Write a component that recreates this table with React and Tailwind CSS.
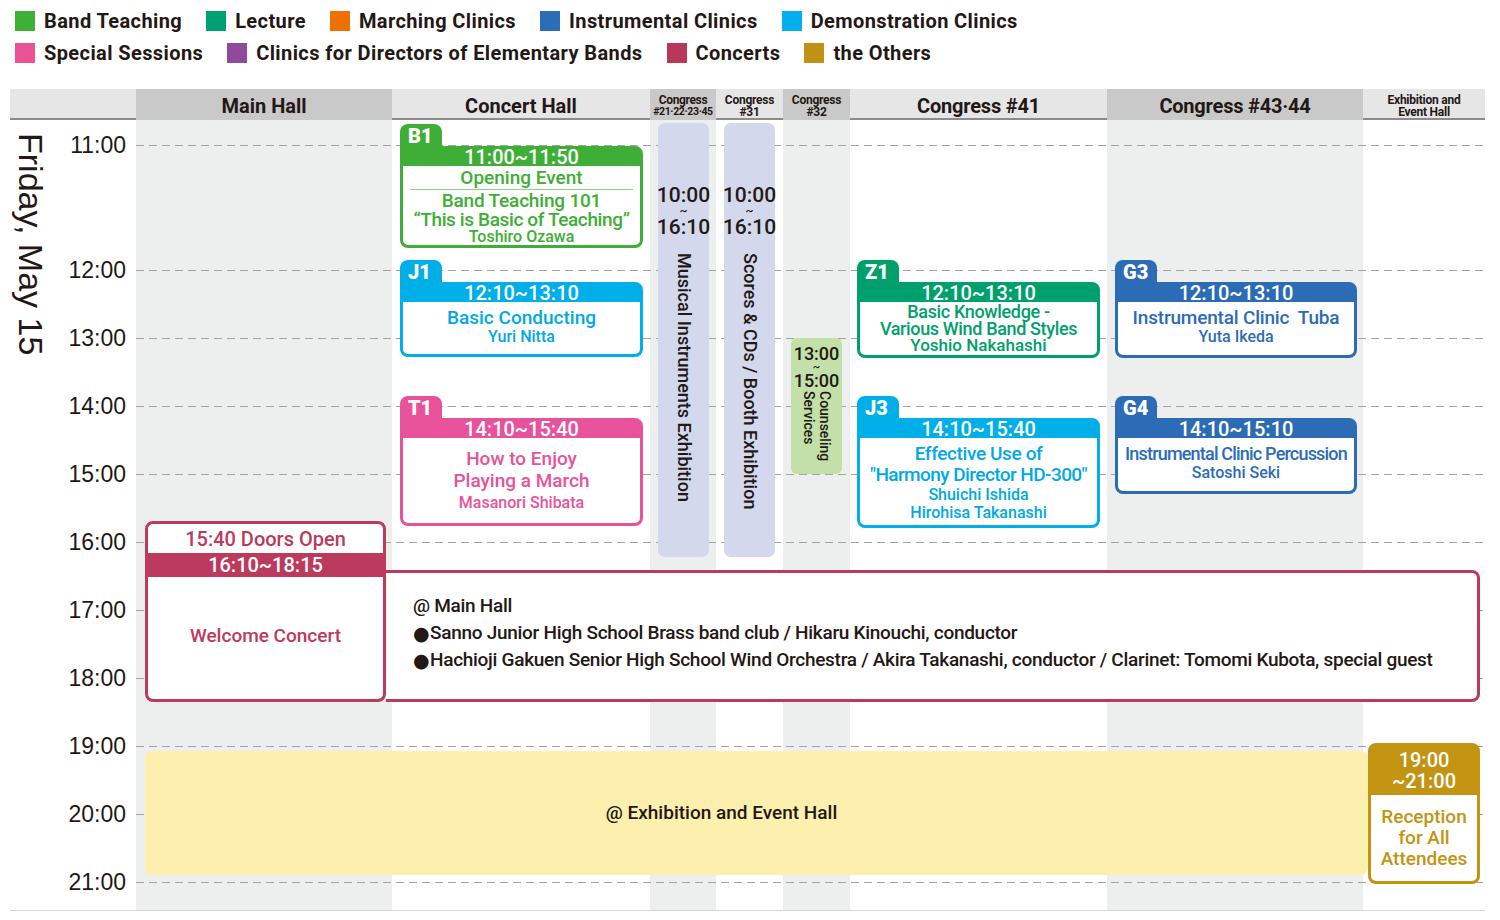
import React from 'react';

// time -> vertical offset inside the timetable body (11:00–12:00 is stretched)
const y = (h, m = 0) => {
  const t = (h - 11) * 60 + m;
  return t <= 60 ? 25 + (t * 125) / 60 : 150 + ((t - 60) * 68) / 60;
};

const HOURS = [11, 12, 13, 14, 15, 16, 17, 18, 19, 20, 21];

const LEGEND = [
  [
    ['Band Teaching', 'bg-[#3db134]'],
    ['Lecture', 'bg-[#00a073]'],
    ['Marching Clinics', 'bg-[#ee7000]'],
    ['Instrumental Clinics', 'bg-[#2b6db7]'],
    ['Demonstration Clinics', 'bg-[#00afec]'],
  ],
  [
    ['Special Sessions', 'bg-[#ea5297]'],
    ['Clinics for Directors of Elementary Bands', 'bg-[#8e4a9b]'],
    ['Concerts', 'bg-[#b9385a]'],
    ['the Others', 'bg-[#c09112]'],
  ],
];

const THEME = {
  green: { bg: 'bg-[#3eae36]', border: 'border-[#3eae36]', text: 'text-[#3eae36]' },
  cyan: { bg: 'bg-[#00aee8]', border: 'border-[#00aee8]', text: 'text-[#00a9e6]' },
  pink: { bg: 'bg-[#e8529a]', border: 'border-[#e8529a]', text: 'text-[#e8529a]' },
  teal: { bg: 'bg-[#00a06c]', border: 'border-[#00a06c]', text: 'text-[#00a06c]' },
  blue: { bg: 'bg-[#2c6cb7]', border: 'border-[#2c6cb7]', text: 'text-[#2c6cb7]' },
};

const COLS = 'grid-cols-[126px_256px_258px_66px_67px_67px_257px_256px_122px]';

function Session({ code, theme, time, x, start, end, extra = 7, w = 243, className = '', children }) {
  const top = Math.round(y(...start) + 1);
  const height = Math.round(y(...end) - y(...start)) + extra;
  return (
    <div className="absolute" style={{ left: x, top: top - 22, width: w }}>
      <div className={`h-[22px] w-[42px] rounded-t-[8px] ${theme.bg} pl-[8px] text-[20px] font-black leading-[25px] text-white`}>
        {code}
      </div>
      <div className={`flex flex-col rounded-[8px] rounded-tl-none border-[3px] ${theme.border} bg-white`} style={{ height }}>
        <div className={`h-[17px] ${theme.bg} text-center text-[20px] font-medium leading-[17px] text-white`}>{time}</div>
        <div className={`flex flex-1 flex-col items-center text-center font-medium ${theme.text} ${className}`}>{children}</div>
      </div>
    </div>
  );
}

function Exhibit({ x, children }) {
  return (
    <div
      className="absolute flex w-[51px] flex-col items-center rounded-[7px] bg-[#d3d8ec] pt-[62px] font-medium text-[#231815]"
      style={{ left: x, top: 3, height: Math.round(y(16, 10)) + 1 }}
    >
      <div className="text-[21px] leading-[21px]">10:00</div>
      <div className="text-[12px] leading-[11px]">~</div>
      <div className="text-[21px] leading-[21px]">16:10</div>
      <div className="mt-[15px] text-[18px] leading-[20px] [writing-mode:vertical-rl]">{children}</div>
    </div>
  );
}

function Bullet() {
  return <span className="inline-block w-[17px] align-[-1px] font-['DejaVu_Sans',sans-serif] text-[19px] leading-none">●</span>;
}

export default function App() {
  return (
    <div className="h-[920px] w-[1500px] overflow-hidden bg-white font-['Roboto','Noto_Sans',sans-serif] text-[#231815]">
      {/* Legend */}
      <div className="flex flex-col gap-[12px] pl-[15px] pt-[11px]">
        {LEGEND.map((row, i) => (
          <div key={i} className="flex h-[20px] items-center gap-x-[24px]">
            {row.map(([label, color]) => (
              <div key={label} className="flex items-center gap-[9px]">
                <span className={`h-[20px] w-[20px] ${color}`} />
                <span className="text-[20px] font-bold leading-[20px] tracking-[0.02em]">{label}</span>
              </div>
            ))}
          </div>
        ))}
      </div>

      {/* Room header */}
      <div className={`ml-[10px] mt-[26px] grid h-[31px] w-[1475px] ${COLS} border-b-2 border-[#8b8b8b] bg-[#e6e6e6] font-bold`}>
        <div />
        <div className="flex items-center justify-center bg-[#c9c9c9] pt-[2px] text-[20px]">Main Hall</div>
        <div className="flex items-center justify-center pt-[2px] text-[20px]">Concert Hall</div>
        <div className="flex flex-col items-center justify-center bg-[#c9c9c9] pt-[1px] text-[12px] leading-[12px] tracking-[-0.03em]">
          <span>Congress</span>
          <span className="text-[10.5px]">#21·22·23·45</span>
        </div>
        <div className="flex flex-col items-center justify-center pt-[1px] text-[12px] leading-[12px] tracking-[-0.02em]">
          <span>Congress</span>
          <span>#31</span>
        </div>
        <div className="flex flex-col items-center justify-center bg-[#c9c9c9] pt-[1px] text-[12px] leading-[12px] tracking-[-0.02em]">
          <span>Congress</span>
          <span>#32</span>
        </div>
        <div className="flex items-center justify-center pt-[2px] text-[20px] tracking-[-0.01em]">Congress #41</div>
        <div className="flex items-center justify-center bg-[#c9c9c9] pt-[2px] text-[20px] tracking-[-0.01em]">Congress #43·44</div>
        <div className="flex flex-col items-center justify-center pt-[1px] text-[12px] leading-[12px] tracking-[-0.02em]">
          <span>Exhibition and</span>
          <span>Event Hall</span>
        </div>
      </div>

      {/* Timetable body */}
      <div className={`relative ml-[10px] grid h-[791px] w-[1475px] ${COLS} border-b border-[#d6d6d6]`}>
        <div />
        <div className="bg-[#edeeee]" />
        <div />
        <div className="bg-[#edeeee]" />
        <div />
        <div className="bg-[#edeeee]" />
        <div />
        <div className="bg-[#edeeee]" />
        <div />

        {/* Day label */}
        <div className="absolute left-[4px] top-[13px] font-['Liberation_Sans',Arial,sans-serif] text-[34px] leading-[34px] [writing-mode:vertical-rl]">
          Friday, May 15
        </div>

        {/* Hour lines */}
        {HOURS.map((h) => (
          <div key={h} className="absolute left-0 flex w-full items-center" style={{ top: Math.round(y(h)) - 13 }}>
            <div className="w-[116px] text-right font-['Liberation_Sans',Arial,sans-serif] text-[23px] leading-[26px]">{h}:00</div>
            <div className="ml-[10px] h-px flex-1 bg-[repeating-linear-gradient(90deg,#a3a3a3_0_8px,transparent_8px_13px)]" />
          </div>
        ))}

        {/* Concert Hall */}
        <Session code="B1" theme={THEME.green} time="11:00~11:50" x={390} start={[11, 0]} end={[11, 50]} extra={-2} className="pt-[2px]">
          <div className="text-[19px] leading-[20px]">Opening Event</div>
          <div className="my-[1px] h-px w-[223px] bg-[#8fcf86]" />
          <div className="text-[19px] leading-[19px] tracking-[-0.01em]">Band Teaching 101</div>
          <div className="text-[19px] leading-[19px] tracking-[-0.02em]">“This is Basic of Teaching”</div>
          <div className="text-[16px] leading-[15px]">Toshiro Ozawa</div>
        </Session>
        <Session code="J1" theme={THEME.cyan} time="12:10~13:10" x={390} start={[12, 10]} end={[13, 10]} className="justify-center pb-[4px]">
          <div className="text-[19px] leading-[21px]">Basic Conducting</div>
          <div className="text-[16px] leading-[17px]">Yuri Nitta</div>
        </Session>
        <Session code="T1" theme={THEME.pink} time="14:10~15:40" x={390} start={[14, 10]} end={[15, 40]} extra={6} className="justify-center">
          <div className="text-[19px] leading-[22px]">How to Enjoy</div>
          <div className="text-[19px] leading-[22px]">Playing a March</div>
          <div className="text-[16px] leading-[21px]">Masanori Shibata</div>
        </Session>

        {/* Congress #41 */}
        <Session code="Z1" theme={THEME.teal} time="12:10~13:10" x={847} start={[12, 10]} end={[13, 10]} extra={8} className="justify-center">
          <div className="text-[18px] leading-[17px] tracking-[-0.02em]">Basic Knowledge -</div>
          <div className="text-[18px] leading-[17px] tracking-[-0.02em]">Various Wind Band Styles</div>
          <div className="text-[17px] leading-[17px]">Yoshio Nakahashi</div>
        </Session>
        <Session code="J3" theme={THEME.cyan} time="14:10~15:40" x={847} start={[14, 10]} end={[15, 40]} extra={8} className="justify-center">
          <div className="text-[19px] leading-[21px] tracking-[-0.02em]">Effective Use of</div>
          <div className="text-[19px] leading-[22px] tracking-[-0.03em]">"Harmony Director HD-300"</div>
          <div className="text-[16px] leading-[18px]">Shuichi Ishida</div>
          <div className="text-[16px] leading-[17px]">Hirohisa Takanashi</div>
        </Session>

        {/* Congress #43·44 */}
        <Session code="G3" theme={THEME.blue} time="12:10~13:10" x={1105} w={242} start={[12, 10]} end={[13, 10]} extra={8} className="justify-center pb-[4px]">
          <div className="whitespace-pre text-[19px] leading-[21px] tracking-[-0.01em]">Instrumental Clinic  Tuba</div>
          <div className="text-[16px] leading-[18px]">Yuta Ikeda</div>
        </Session>
        <Session code="G4" theme={THEME.blue} time="14:10~15:10" x={1105} w={242} start={[14, 10]} end={[15, 10]} extra={8} className="justify-center pb-[4px]">
          <div className="whitespace-nowrap text-[18px] leading-[21px] tracking-[-0.045em]">Instrumental Clinic Percussion</div>
          <div className="text-[16px] leading-[18px]">Satoshi Seki</div>
        </Session>

        {/* Exhibitions */}
        <Exhibit x={648}>Musical Instruments Exhibition</Exhibit>
        <Exhibit x={714}>Scores &amp; CDs / Booth Exhibition</Exhibit>
        <div
          className="absolute left-[781px] flex w-[51px] flex-col items-center rounded-[6px] bg-[#c2e0a8] pt-[7px] font-medium"
          style={{ top: Math.round(y(13)), height: Math.round(y(15) - y(13)) }}
        >
          <div className="text-[18px] leading-[17px]">13:00</div>
          <div className="text-[11px] leading-[10px]">~</div>
          <div className="text-[18px] leading-[17px]">15:00</div>
          <div className="mt-[2px] text-[14px] leading-[16px] [writing-mode:vertical-rl]">
            Counseling
            <br />
            Services
          </div>
        </div>

        {/* Welcome concert */}
        <div
          className="absolute left-[135px] flex w-[241px] flex-col rounded-[8px] border-[3px] border-[#bb3a5d] bg-white font-medium text-[#bb3a5d]"
          style={{ top: Math.round(y(15, 40)) + 2, height: 181 }}
        >
          <div className="h-[29px] text-center text-[20px] leading-[30px]">15:40 Doors Open</div>
          <div className="h-[24px] bg-[#bb3a5d] text-center text-[20px] leading-[25px] text-white">16:10~18:15</div>
          <div className="flex flex-1 items-center justify-center pb-[3px] text-[19px]">Welcome Concert</div>
        </div>
        <div
          className="absolute left-[376px] flex w-[1094px] flex-col justify-center rounded-r-[8px] border-[3px] border-l-0 border-[#bb3a5d] bg-white pb-[8px] pl-[27px] text-[19px] font-medium leading-[27px] tracking-[-0.015em]"
          style={{ top: 450, height: 132 }}
        >
          <div>@ Main Hall</div>
          <div>
            <Bullet />
            Sanno Junior High School Brass band club / Hikaru Kinouchi, conductor
          </div>
          <div className="whitespace-nowrap">
            <Bullet />
            Hachioji Gakuen Senior High School Wind Orchestra / Akira Takanashi, conductor / Clarinet: Tomomi Kubota, special guest
          </div>
        </div>

        {/* Exhibition and Event Hall */}
        <div
          className="absolute left-[135px] flex w-[1223px] items-center justify-center rounded-[7px] bg-[#fdefae] pr-[70px] text-[19px] font-medium"
          style={{ top: Math.round(y(19)) + 5, height: 124 }}
        >
          @ Exhibition and Event Hall
        </div>
        <div
          className="absolute left-[1358px] flex w-[112px] flex-col rounded-[8px] border-[3px] border-[#c29411] bg-white text-center font-medium"
          style={{ top: Math.round(y(19)) - 3, height: 141 }}
        >
          <div className="flex h-[49px] flex-col justify-center bg-[#c29411] text-[20px] leading-[21px] text-white">
            <span>19:00</span>
            <span>~21:00</span>
          </div>
          <div className="flex flex-1 flex-col justify-center pb-[2px] text-[19px] leading-[21px] text-[#c29411]">
            <span>Reception</span>
            <span>for All</span>
            <span>Attendees</span>
          </div>
        </div>
      </div>
    </div>
  );
}
